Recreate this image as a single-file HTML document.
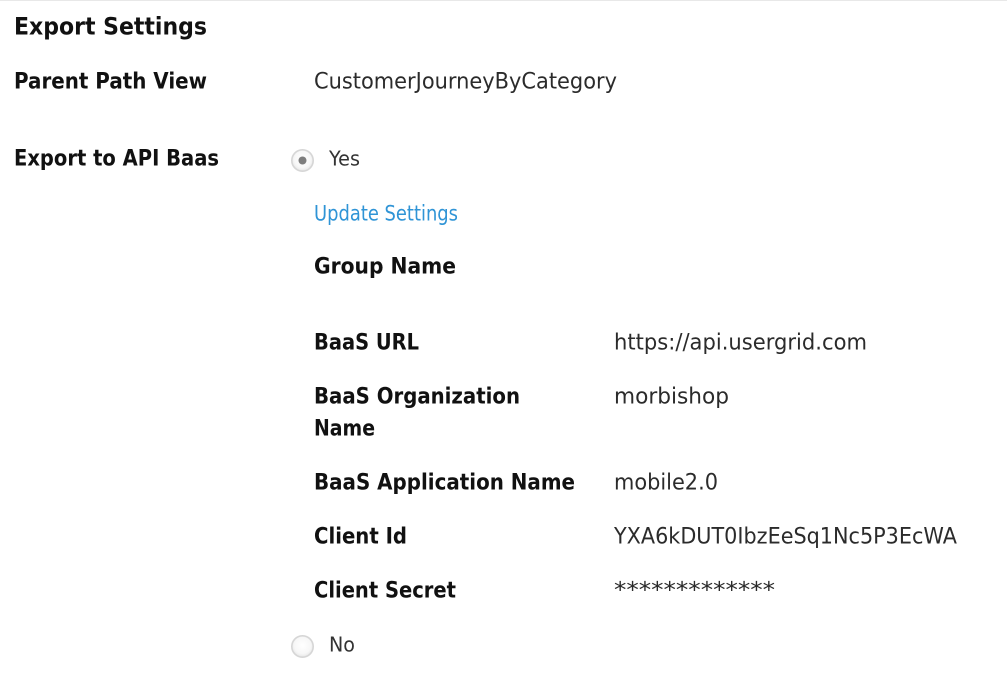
<!DOCTYPE html>
<html><head><meta charset="utf-8"><style>
html,body{margin:0;padding:0;background:#fff;width:1007px;height:674px;overflow:hidden}
svg{display:block}
text{font-family:"DejaVu Sans","Liberation Sans",sans-serif}
.b{font-weight:700;font-size:22px;fill:#111}
.h{font-weight:700;font-size:24px;fill:#111}
.r{font-size:22.5px;fill:#2b2b2b}
.s{font-size:20px;fill:#333}
</style></head><body>
<svg width="1007" height="674" viewBox="0 0 1007 674" xmlns="http://www.w3.org/2000/svg">
<defs>
<radialGradient id="rg" cx="50%" cy="45%" r="55%"><stop offset="0" stop-color="#fff"/><stop offset="0.7" stop-color="#f7f7f7"/><stop offset="1" stop-color="#e6e6e6"/></radialGradient>
</defs>
<rect x="0" y="0" width="1007" height="1" fill="#e8e8e8"/>
<circle cx="302.5" cy="160.5" r="10.7" fill="url(#rg)" stroke="#d6d6d6" stroke-width="1.6"/>
<circle cx="302.5" cy="160.5" r="4" fill="#7d7d7d"/>
<circle cx="302.5" cy="646.5" r="10.7" fill="url(#rg)" stroke="#d6d6d6" stroke-width="1.6"/>
<g transform="translate(0,-0.5)">
<text class="h" x="14" y="35" textLength="193" lengthAdjust="spacingAndGlyphs">Export Settings</text>
<text class="b" x="14" y="89" textLength="193" lengthAdjust="spacingAndGlyphs">Parent Path View</text>
<text class="r" x="314" y="89" textLength="303" lengthAdjust="spacingAndGlyphs">CustomerJourneyByCategory</text>
<text class="b" x="14" y="166" textLength="205" lengthAdjust="spacingAndGlyphs">Export to API Baas</text>
<text class="s" x="329" y="166" textLength="31" lengthAdjust="spacingAndGlyphs">Yes</text>
<text class="r" x="314" y="221" textLength="144" lengthAdjust="spacingAndGlyphs" style="fill:#2f94d6;font-size:21.5px">Update Settings</text>
<text class="b" x="314" y="274" textLength="142" lengthAdjust="spacingAndGlyphs">Group Name</text>
<text class="b" x="314" y="350" textLength="105" lengthAdjust="spacingAndGlyphs">BaaS URL</text>
<text class="r" x="614" y="350" textLength="253" lengthAdjust="spacingAndGlyphs">https://api.usergrid.com</text>
<text class="b" x="314" y="404" textLength="206" lengthAdjust="spacingAndGlyphs">BaaS Organization</text>
<text class="b" x="314" y="436" textLength="61" lengthAdjust="spacingAndGlyphs">Name</text>
<text class="r" x="614" y="404" textLength="115" lengthAdjust="spacingAndGlyphs">morbishop</text>
<text class="b" x="314" y="490" textLength="261" lengthAdjust="spacingAndGlyphs">BaaS Application Name</text>
<text class="r" x="614" y="490" textLength="104" lengthAdjust="spacingAndGlyphs">mobile2.0</text>
<text class="b" x="314" y="544" textLength="93" lengthAdjust="spacingAndGlyphs">Client Id</text>
<text class="r" x="614" y="544" textLength="343" lengthAdjust="spacingAndGlyphs">YXA6kDUT0IbzEeSq1Nc5P3EcWA</text>
<text class="b" x="314" y="598" textLength="142" lengthAdjust="spacingAndGlyphs">Client Secret</text>
<text class="r" x="614" y="598" textLength="161" lengthAdjust="spacingAndGlyphs">*************</text>
<text class="s" x="329" y="652" textLength="26" lengthAdjust="spacingAndGlyphs">No</text>
</g>
</svg>
</body></html>
